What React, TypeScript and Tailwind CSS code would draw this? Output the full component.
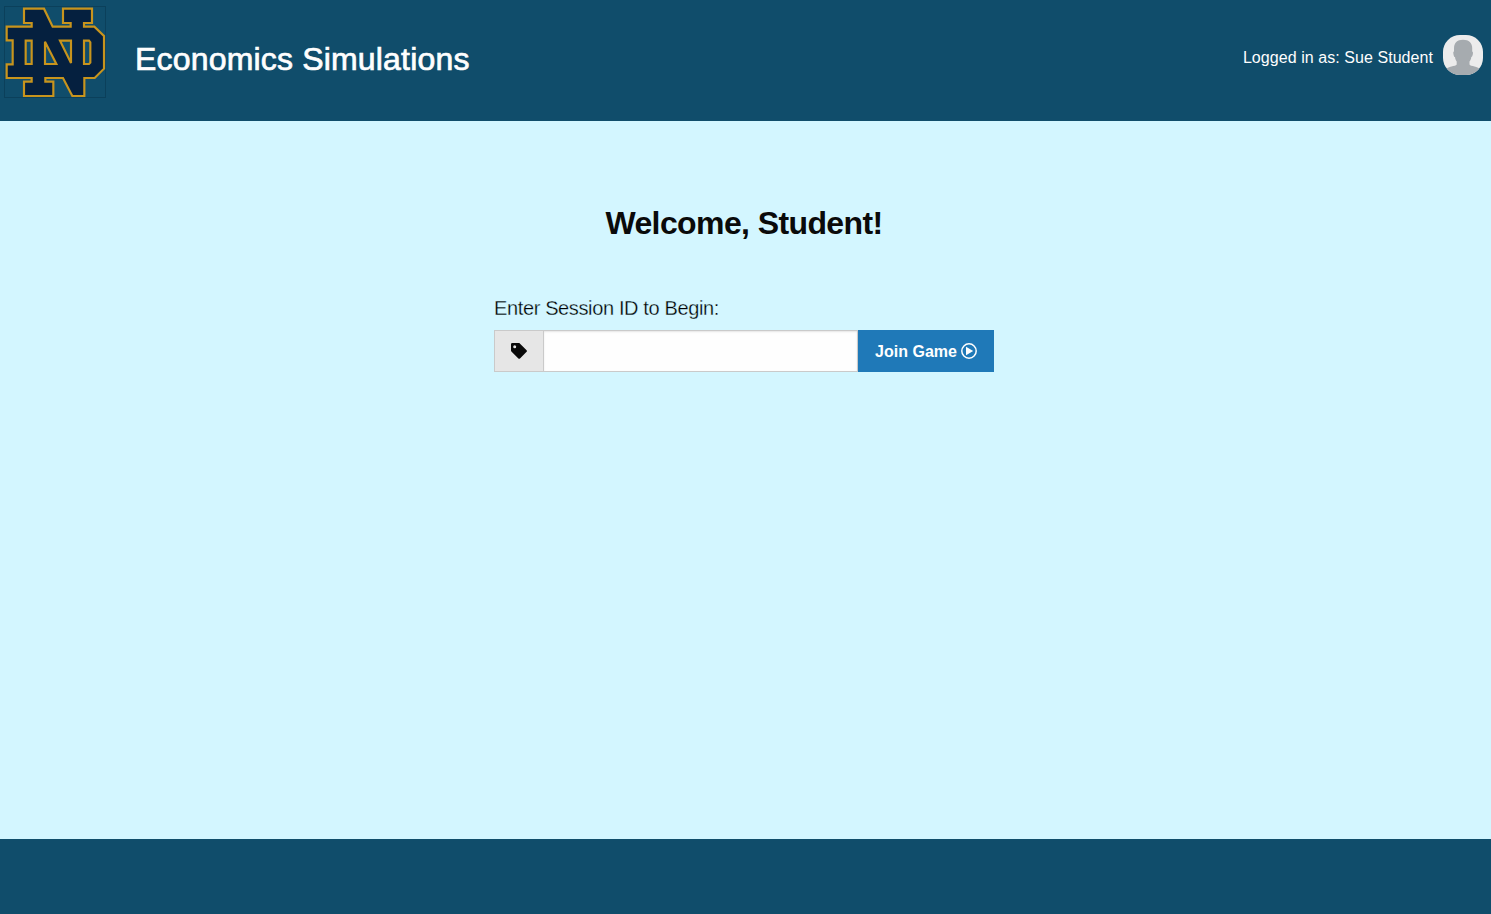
function Logo() {
  return (
    <svg className="h-[92px] w-[102px] shrink-0" viewBox="12 18 306 276" fill="none" aria-hidden="true">
      <rect x="13.5" y="19.5" width="303" height="273" stroke="#0b405b" strokeWidth="3" />
      <path
        transform="translate(1 1)"
        fillRule="evenodd"
        fill="#05203f"
        stroke="#c8941d"
        strokeWidth="6.5"
        d="M71 25H131L157 79H211V68H188V25H275V68H251V79H282L311 107V205L283 233H252V287H216L188 233H135V244H159V287H71V244H94V233H19V192H37V120H19V79H94V68H71ZM76 121H94V191H76ZM134 124V191H168ZM179 121H212V188ZM251 121H266L270 126V187L266 191H251Z"
      />
    </svg>
  );
}

function Avatar() {
  return (
    <div className="h-10 w-10 shrink-0 overflow-hidden rounded-[17px] bg-[#ececec]">
      <svg className="h-10 w-10" viewBox="0 0 40 40" aria-hidden="true">
        <path
          fill="#a6abaf"
          d="M20 4.700C14 4.700 11 8.200 11 13V16.500C10 16.500 10.200 18 10.500 19.400C10.800 21 11.200 22 12 22C12.300 24.500 13 25.600 13.700 26.600V29.500C12.500 31.500 5 31 2 35V40H38V35C35 31 27.500 31.500 26.500 29.500V26.600C27.300 25.600 28 24.500 28.300 22C29.200 21.800 29.600 20.500 29.900 19C30.100 17.500 29.900 16.500 29.200 16.500V13C29.200 8.200 26 4.700 20 4.700Z"
        />
      </svg>
    </div>
  );
}

function TagIcon() {
  return (
    <svg className="h-4 w-4" viewBox="0 0 16 16" aria-hidden="true">
      <path
        fill="#0a0a0a"
        fillRule="evenodd"
        d="M1.300 0H8.300L15.600 7.200Q16.300 8 15.600 8.800L9 15.400Q8.200 16.200 7.400 15.400L.4 8.500Q0 8 0 7.500V1.300Q0 0 1.300 0ZM3.700 2.200A1.500 1.500 0 1 0 3.700 5.200A1.500 1.500 0 1 0 3.700 2.200Z"
      />
    </svg>
  );
}

function PlayIcon() {
  return (
    <svg className="h-4 w-4 shrink-0" viewBox="0 0 16 16" fill="none" aria-hidden="true">
      <circle cx="8" cy="8" r="7.200" stroke="#fefefe" strokeWidth="1.500" />
      <path d="M5 3.700L12.200 8L5 12.300Z" fill="#fefefe" />
    </svg>
  );
}

export default function App() {
  return (
    <div className="flex h-[914px] flex-col bg-[#d3f6ff] font-['Liberation_Sans',Arial,sans-serif] text-[#0a0a0a]">
      <header className="flex h-[121px] shrink-0 items-start bg-[#104d6b] pt-1.5 pr-2 pl-1 text-[#fefefe]">
        <Logo />
        <h1 className="mt-[35px] ml-[29px] text-[32px] leading-9 tracking-[0.18px] whitespace-nowrap [-webkit-text-stroke:0.7px_#fefefe]">
          Economics Simulations
        </h1>
        <div className="mt-[29px] ml-auto flex items-center gap-2.5">
          <span className="pt-[5px] text-base leading-6 tracking-[0.06px] whitespace-nowrap">Logged in as: Sue Student</span>
          <Avatar />
        </div>
      </header>
      <main className="flex grow justify-center pr-[3px]">
        <div className="w-[500px] pt-[82px]">
          <h2 className="text-center text-[32px] leading-10 font-bold tracking-[-0.6px] whitespace-nowrap">Welcome, Student!</h2>
          <label htmlFor="session-id" className="mt-[47px] block text-xl leading-9 tracking-[-0.37px] whitespace-nowrap text-black [-webkit-text-stroke:0.3px_#d3f6ff]">
            Enter Session ID to Begin:
          </label>
          <div className="mt-1 flex h-[42px]">
            <span className="flex w-[49px] items-center justify-center border border-r-0 border-[#cacaca] bg-[#e6e6e6]">
              <TagIcon />
            </span>
            <input
              id="session-id"
              type="text"
              className="w-[315px] border border-[#cacaca] bg-[#fefefe] px-2 shadow-[inset_0_1px_2px_rgba(10,10,10,0.1)] outline-none"
            />
            <button type="button" className="flex w-[136px] items-center justify-center gap-1 bg-[#1f79b8] text-base font-bold whitespace-nowrap text-[#fefefe]">
              <span className="pt-0.5">Join Game</span>
              <PlayIcon />
            </button>
          </div>
        </div>
      </main>
      <footer className="h-[75px] shrink-0 bg-[#104d6b]" />
    </div>
  );
}
